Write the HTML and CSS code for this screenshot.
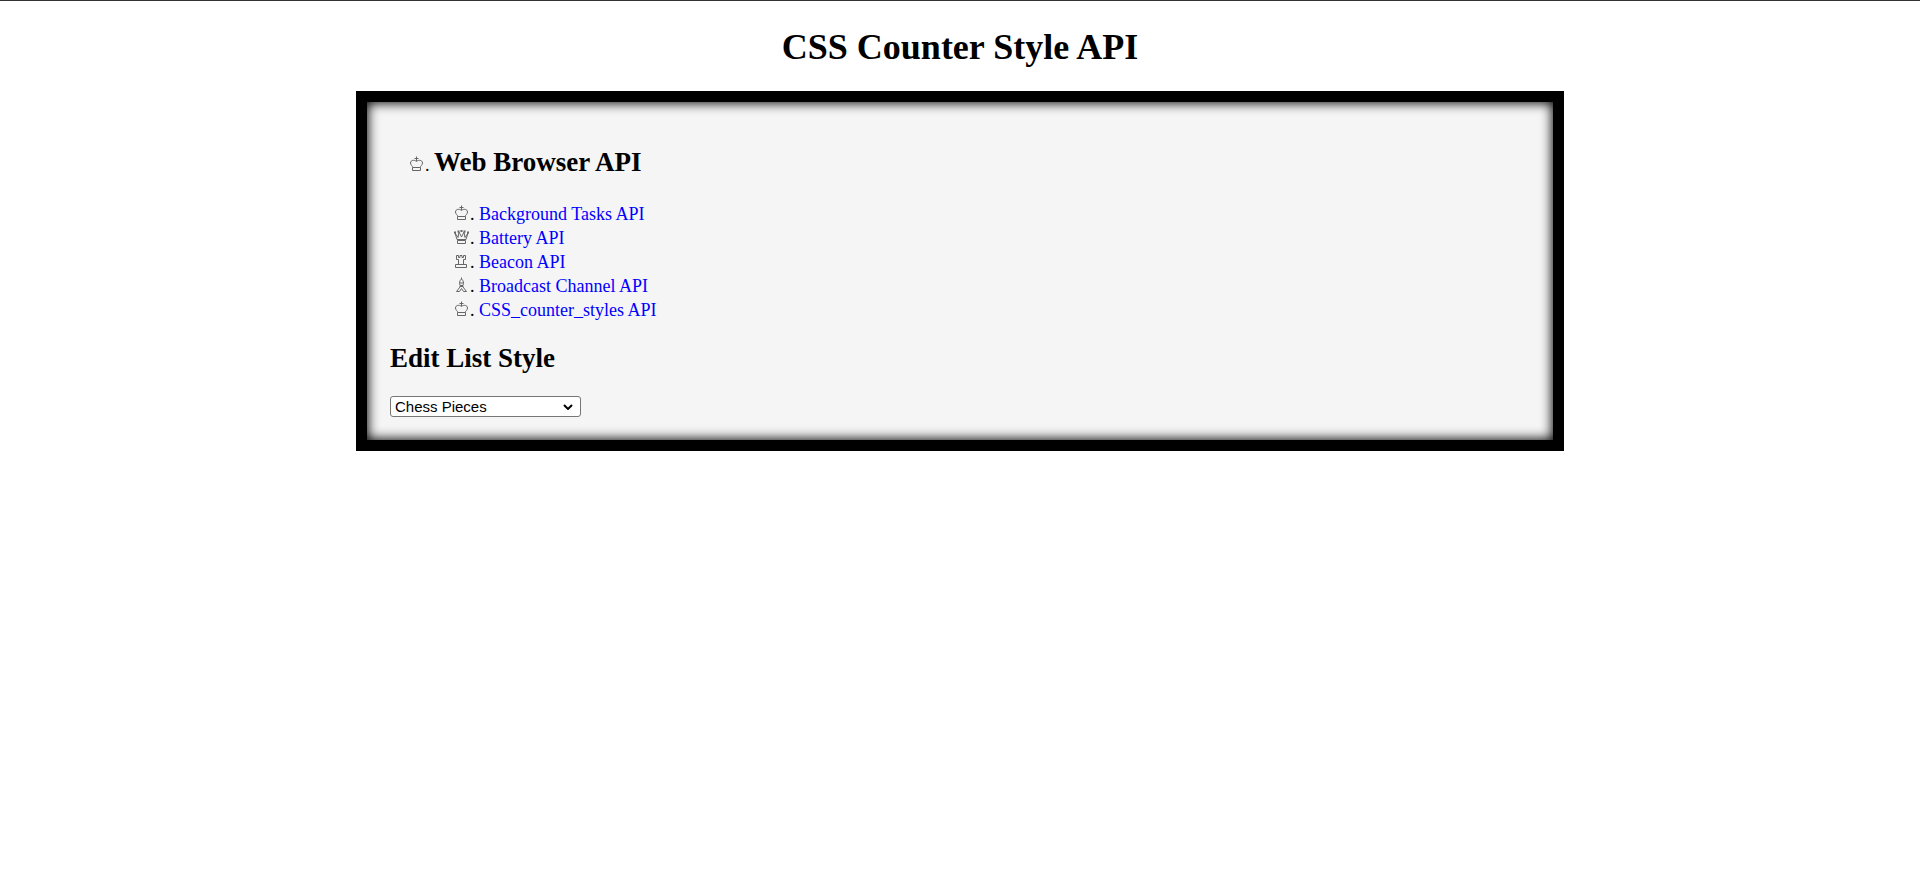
FILE: index.html
```html
<!DOCTYPE html>
<html lang="en">
<head>
<meta charset="utf-8">
<title>CSS Counter Style API</title>
<link rel="stylesheet" href="styles.css">
</head>
<body>
<h1 class="title">CSS Counter Style API</h1>
<main class="box">
  <ul class="list">
    <li>
      <div class="row">
        <span class="marker"><svg class="piece" viewBox="0 0 16 16" role="img" aria-label="♔"><path d="M7.500 .500V5M5.500 2.500H9.500M7.500 5.500C5.500 3.500 1.500 4 1.500 7C1.500 9 3.500 10 4 11.500H11C11.500 10 13.500 9 13.500 7C13.500 4 9.500 3.500 7.500 5.500ZM3.500 11.500H11.500V14.500H3.500Z"/></svg>.</span>
        <h2 class="heading">Web Browser API</h2>
      </div>
      <ul class="list sublist">
        <li class="row"><span class="marker"><svg class="piece" viewBox="0 0 16 16" role="img" aria-label="♔"><path d="M7.500 .500V5M5.500 2.500H9.500M7.500 5.500C5.500 3.500 1.500 4 1.500 7C1.500 9 3.500 10 4 11.500H11C11.500 10 13.500 9 13.500 7C13.500 4 9.500 3.500 7.500 5.500ZM3.500 11.500H11.500V14.500H3.500Z"/></svg>.</span><a href="#">Background Tasks API</a></li>
        <li class="row"><span class="marker"><svg class="piece" viewBox="0 0 16 16" role="img" aria-label="♕"><path d="M1 4L3 10.500H12L14 4L11 8.500L10 3L7.500 8L5 3L4 8.500ZM3.500 11.500H11.500V14.500H3.500Z"/><path class="dots" d="M0 3.500H2M3.500 2.500H5.500M6.500 2H8.500M9.500 2.500H11.500M13 3.500H15"/></svg>.</span><a href="#">Battery API</a></li>
        <li class="row"><span class="marker"><svg class="piece" viewBox="0 0 16 16" role="img" aria-label="♖"><path d="M2.500 2.500H4.500V4.500H6V2.500H8V4.500H9.500V2.500H11.500V6.500H9.500V11.500H4.500V6.500H2.500ZM1.500 11.500H12.500V14.500H1.500Z"/></svg>.</span><a href="#">Beacon API</a></li>
        <li class="row"><span class="marker"><svg class="piece" viewBox="0 0 16 16" role="img" aria-label="♗"><path d="M7.500 .500V2M7.500 2C5.500 3.500 5 6 6 8.500H9C10 6 9.500 3.500 7.500 2ZM6 6H9M5.500 9.500H9.500M6 10L2.500 14.500H5.500L7.500 11.500L9.500 14.500H12.500L9 10"/></svg>.</span><a href="#">Broadcast Channel API</a></li>
        <li class="row"><span class="marker"><svg class="piece" viewBox="0 0 16 16" role="img" aria-label="♔"><path d="M7.500 .500V5M5.500 2.500H9.500M7.500 5.500C5.500 3.500 1.500 4 1.500 7C1.500 9 3.500 10 4 11.500H11C11.500 10 13.500 9 13.500 7C13.500 4 9.500 3.500 7.500 5.500ZM3.500 11.500H11.500V14.500H3.500Z"/></svg>.</span><a href="#">CSS_counter_styles API</a></li>
      </ul>
    </li>
  </ul>
  <h2 class="heading edit">Edit List Style</h2>
  <select class="picker">
    <option>Chess Pieces</option>
  </select>
</main>
</body>
</html>
```
FILE: styles.css
```css
html, body {
  margin: 0;
  padding: 0;
}

body {
  background: #fff;
  border-top: 1px solid #333;
  font-family: "Liberation Serif", serif;
  color: #000;
}

.title {
  margin: 0;
  padding-top: 28px;
  height: 62px;
  font-size: 36px;
  line-height: 36px;
  text-align: center;
}

.box {
  box-sizing: border-box;
  width: 1208px;
  height: 360px;
  margin-left: 356px;
  border: 11px solid #000;
  background: #f5f5f5;
  box-shadow: inset 0 0 12px 1px #000;
  padding: 0 23px;
}

.list {
  list-style: none;
  margin: 0;
  padding: 45px 0 0 18px;
  font-size: 18px;
  line-height: 24px;
}

.sublist {
  padding: 0 0 0 45px;
}

.row {
  display: flex;
  align-items: baseline;
}

.marker {
  flex: none;
  width: 26px;
}

.piece {
  width: 16px;
  height: 16px;
  margin: 0 0 0 1px;
  vertical-align: -1px;
  fill: none;
  stroke: #666;
  stroke-width: 1;
}

.piece .dots {
  stroke-width: 2;
}

.heading {
  margin: 0 0 24px;
  font-size: 27px;
  line-height: 31px;
}

.edit {
  margin: 21px 0 22px;
}

.list a {
  color: #00f;
  text-decoration: none;
}

.picker {
  display: block;
  appearance: none;
  box-sizing: border-box;
  width: 191px;
  height: 21px;
  padding: 0 0 0 4px;
  border: 1px solid #767676;
  border-radius: 3px;
  background: #fff url("data:image/svg+xml,%3Csvg xmlns='http://www.w3.org/2000/svg' width='10' height='6'%3E%3Cpath d='M1 1l4 4 4-4' fill='none' stroke='%23000' stroke-width='2'/%3E%3C/svg%3E") no-repeat 172px 7px;
  font-family: "Liberation Sans", sans-serif;
  font-size: 15px;
  line-height: 19px;
  color: #000;
}
```
